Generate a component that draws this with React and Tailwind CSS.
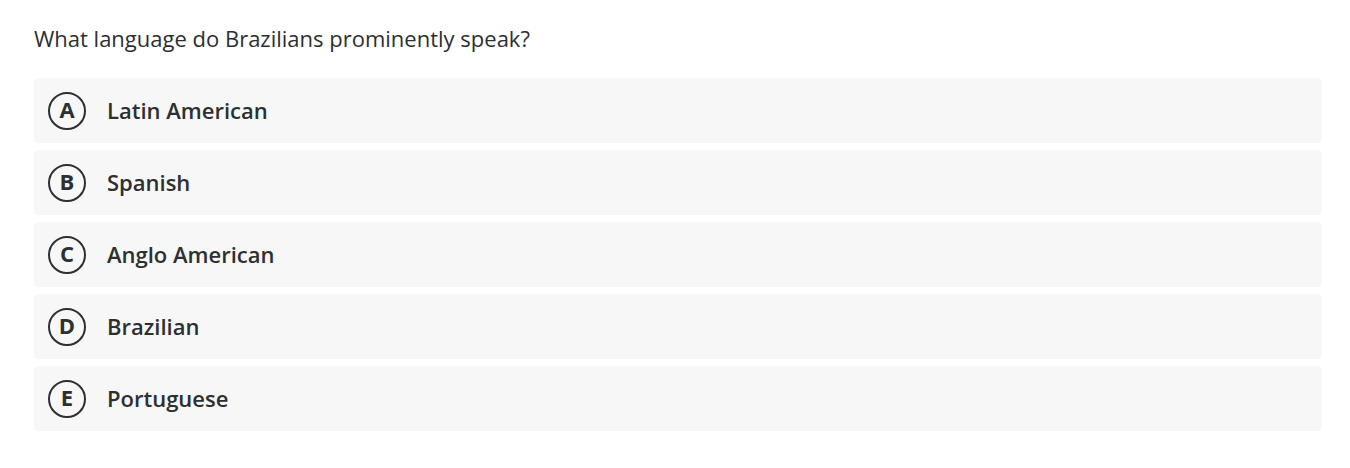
import React from 'react';

const OPTIONS = [
  { key: 'A', label: 'Latin American' },
  { key: 'B', label: 'Spanish' },
  { key: 'C', label: 'Anglo American' },
  { key: 'D', label: 'Brazilian' },
  { key: 'E', label: 'Portuguese' },
];

export default function App() {
  return (
    <div className="min-h-[468px] bg-white pl-[34px] pr-[28px] pt-[24px] text-[#2d2f31] font-['Open_Sans',sans-serif]">
      <p className="text-[22px] leading-7 mb-[26px]">What language do Brazilians prominently speak?</p>

      <ul className="flex flex-col gap-[7px]">
        {OPTIONS.map(({ key, label }) => (
          <li key={key} className="flex items-center h-[65px] rounded bg-[#f7f7f7] pl-[14px]">
            <span className="flex items-center justify-center w-[38px] h-[38px] rounded-full border-[2.5px] border-[#2d2f31] text-[22px] font-bold leading-none pb-[3px]">
              {key}
            </span>
            <span className="ml-[21px] text-[22px] font-semibold">{label}</span>
          </li>
        ))}
      </ul>
    </div>
  );
}
